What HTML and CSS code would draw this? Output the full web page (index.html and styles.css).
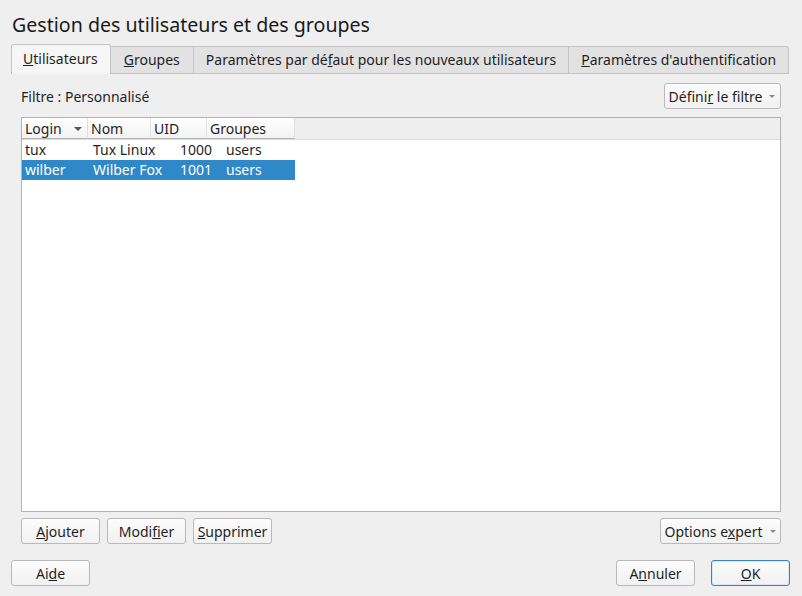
FILE: index.html
```html
<!DOCTYPE html>
<html lang="fr">
<head>
<meta charset="utf-8">
<title>Gestion des utilisateurs et des groupes</title>
<link rel="stylesheet" href="styles.css">
</head>
<body>
<div class="window">
  <h1 class="title">Gestion des utilisateurs et des groupes</h1>
  <div class="tabbar">
    <div class="tab active"><u>U</u>tilisateurs</div>
    <div class="tab"><u>G</u>roupes</div>
    <div class="tab">Paramètres par dé<u>f</u>aut pour les nouveaux utilisateurs</div>
    <div class="tab"><u>P</u>aramètres d'authentification</div>
  </div>
  <div class="pane">
    <div class="filter-row">
      <span class="filter-label">Filtre : Personnalisé</span>
      <button class="btn menu"><span>Défini<u>r</u> le filtre</span><span class="caret"></span></button>
    </div>
    <div class="table">
      <div class="thead">
        <div class="th c-login">Login<span class="sort"></span></div>
        <div class="th c-nom">Nom</div>
        <div class="th c-uid">UID</div>
        <div class="th c-grp">Groupes</div>
        <div class="th-rest"></div>
      </div>
      <div class="row">
        <div class="td d-login">tux</div>
        <div class="td d-nom">Tux Linux</div>
        <div class="td d-uid">1000</div>
        <div class="td d-grp">users</div>
      </div>
      <div class="row selected">
        <div class="td d-login">wilber</div>
        <div class="td d-nom">Wilber Fox</div>
        <div class="td d-uid">1001</div>
        <div class="td d-grp">users</div>
      </div>
    </div>
    <div class="actions">
      <button class="btn"><span><u>A</u>jouter</span></button>
      <button class="btn"><span>Modi<u>f</u>ier</span></button>
      <button class="btn"><span><u>S</u>upprimer</span></button>
      <span class="spacer"></span>
      <button class="btn menu wide"><span>Options e<u>x</u>pert</span><span class="caret"></span></button>
    </div>
  </div>
  <div class="footer">
    <button class="btn"><span>Ai<u>d</u>e</span></button>
    <span class="spacer"></span>
    <button class="btn"><span>A<u>n</u>nuler</span></button>
    <button class="btn default"><span><u>O</u>K</span></button>
  </div>
</div>
</body>
</html>
```
FILE: styles.css
```css
* { box-sizing: border-box; }
html, body {
  margin: 0;
  padding: 0;
  background: #efefef;
}
body {
  font-family: "Noto Sans", "DejaVu Sans", sans-serif;
  font-size: 14px;
  color: #1f1f1f;
}
.window {
  width: 802px;
  height: 596px;
  display: flex;
  flex-direction: column;
}
.title {
  margin: 0;
  padding: 13px 0 0 12px;
  font-size: 19.6px;
  font-weight: normal;
  line-height: 24px;
  height: 44px;
  color: #1a1a1a;
}
.tabbar {
  display: flex;
  align-items: flex-end;
  padding-left: 11px;
  height: 30px;
}
.tab {
  height: 28px;
  line-height: 26px;
  padding: 0 12px;
  background: #e2e2e2;
  border: 1px solid #c4c4c4;
  border-left: none;
  white-space: nowrap;
}
.tab:nth-child(2) { padding: 0 13px; }
.tab:last-child { border-top-right-radius: 3px; }
.tab.active {
  height: 30px;
  line-height: 28px;
  background: #f6f6f6;
  border: 1px solid #c4c4c4;
  border-bottom: none;
  border-radius: 3px 3px 0 0;
  padding: 0 12px 0 11px;
}
.pane {
  padding: 9px 21px 0 21px;
  display: flex;
  flex-direction: column;
}
.filter-row {
  display: flex;
  align-items: center;
  justify-content: space-between;
  height: 26px;
}
.filter-label { padding-top: 0; }
.btn {
  font-family: inherit;
  font-size: 14px;
  color: #1f1f1f;
  height: 26px;
  width: 79px;
  padding: 0 6px;
  background: linear-gradient(#fcfcfc, #f1f1f1);
  border: 1px solid #b9b9b9;
  border-radius: 3px;
  display: inline-flex;
  align-items: center;
  justify-content: center;
  white-space: nowrap;
}
.btn.menu { width: auto; padding: 0 6px 0 5px; }
.btn.wide { width: 121px; }
.filter-row .btn.menu { width: 117px; }
.caret {
  display: inline-block;
  width: 0;
  height: 0;
  margin-left: 7px;
  border-left: 3px solid transparent;
  border-right: 3px solid transparent;
  border-top: 3px solid #8a8a8a;
}
.btn.default {
  border-color: #3b84c0;
  box-shadow: inset 0 0 0 1px #d6e6f3;
}
.table {
  margin-top: 8px;
  height: 395px;
  background: #ffffff;
  border: 1px solid #b3b3b3;
}
.thead {
  display: flex;
  height: 22px;
  background: #eeeeee;
  border-bottom: 1px solid #dcdcdc;
}
.th {
  height: 21px;
  line-height: 21px;
  padding-left: 3px;
  background: linear-gradient(#ffffff, #f2f2f2);
  border-right: 1px solid #e0e0e0;
  border-bottom: 1px solid #b4b4b4;
  position: relative;
  white-space: nowrap;
}
.th-rest { flex: 1; }
.sort {
  position: absolute;
  right: 5px;
  top: 9px;
  border-left: 4px solid transparent;
  border-right: 4px solid transparent;
  border-top: 4px solid #555;
}
.c-login { width: 66px; }
.c-nom { width: 63px; }
.c-uid { width: 56px; }
.c-grp { width: 88px; }
.row {
  display: flex;
  height: 20px;
  line-height: 20px;
  width: 273px;
  padding-left: 3px;
}
.td { white-space: nowrap; }
.d-login { width: 68px; }
.d-nom { width: 87px; }
.d-uid { width: 46px; }
.row.selected {
  background: #2f88c8;
  color: #ffffff;
}
.actions {
  display: flex;
  gap: 7px;
  margin-top: 6px;
  height: 26px;
}
.spacer { flex: 1; }
.footer {
  display: flex;
  gap: 16px;
  padding: 16px 12px 0 11px;
  height: 42px;
}
```
